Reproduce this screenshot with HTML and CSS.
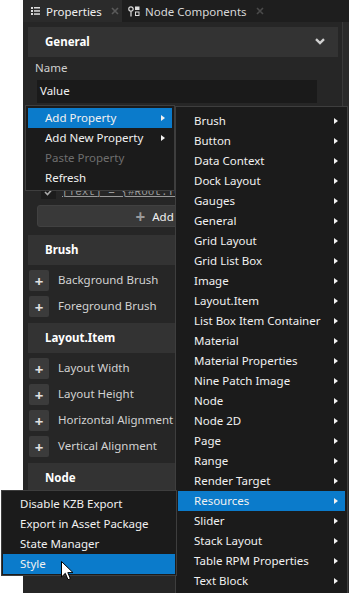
FILE: index.html
```html
<!DOCTYPE html>
<html lang="en">

<head>
    <meta charset="UTF-8">
    <meta name="viewport" content="width=device-width, initial-scale=1.0">
    <title>Properties</title>
    <link rel="stylesheet" href="styles.css">
</head>

<body>

    <!-- properties window -->
    <div class="panel">
        <div class="tabs">
            <div class="tab active">
                <svg class="tab-icon" width="9" height="8" viewBox="0 0 9 8">
                    <rect x="0" y="0" width="2" height="2" fill="#ddd"/>
                    <rect x="3" y="0" width="6" height="1.5" fill="#ddd"/>
                    <rect x="0" y="3" width="2" height="2" fill="#ddd"/>
                    <rect x="3" y="3.2" width="6" height="1.5" fill="#ddd"/>
                    <rect x="0" y="6" width="2" height="2" fill="#ddd"/>
                    <rect x="3" y="6.3" width="6" height="1.5" fill="#ddd"/>
                </svg>
                <span class="tab-title">Properties</span>
                <svg class="tab-close" width="8" height="8" viewBox="0 0 8 8">
                    <path d="M1 1 L7 7 M7 1 L1 7" stroke="#5a5a5a" stroke-width="1.6"/>
                </svg>
            </div>
            <div class="tab">
                <svg class="tab-icon" width="13" height="11" viewBox="0 0 13 11">
                    <circle cx="3" cy="3" r="2.2" fill="none" stroke="#ddd" stroke-width="1.2"/>
                    <path d="M3 5.2 V10.5" stroke="#ddd" stroke-width="1.2"/>
                    <rect x="7" y="0.5" width="4.5" height="3.5" fill="#ddd"/>
                    <rect x="7.5" y="6" width="3.5" height="3.5" fill="none" stroke="#ddd" stroke-width="1"/>
                </svg>
                <span class="tab-title">Node Components</span>
                <svg class="tab-close" width="8" height="8" viewBox="0 0 8 8">
                    <path d="M1 1 L7 7 M7 1 L1 7" stroke="#4a4a4a" stroke-width="1.6"/>
                </svg>
            </div>
        </div>

        <div class="panel-body">
            <div class="content">

                <!-- General -->
                <div class="section-head">
                    <span>General</span>
                    <svg width="10" height="7" viewBox="0 0 10 7">
                        <path d="M1 1.2 L5 5 L9 1.2" fill="none" stroke="#d0d0d0" stroke-width="2.4"/>
                    </svg>
                </div>
                <div class="general">
                    <div class="field-label">Name</div>
                    <div class="field-input">Value</div>
                    <div class="field-label">Text</div>
                    <div class="field-input">Text</div>
                    <div class="binding">
                        <span class="check">
                            <svg width="9" height="8" viewBox="0 0 9 8">
                                <path d="M1 4 L3.5 6.5 L8 1.5" fill="none" stroke="#aaa" stroke-width="1.6"/>
                            </svg>
                        </span>
                        <span class="binding-text">[Text] = {#Root.Text}</span>
                    </div>
                    <div class="add-btn"><span class="plus">+</span>Add Binding</div>
                </div>

                <!-- Brush -->
                <div class="section-head"><span>Brush</span></div>
                <div class="rows">
                    <div class="row"><span class="add">+</span>Background Brush</div>
                    <div class="row"><span class="add">+</span>Foreground Brush</div>
                </div>

                <!-- Layout.Item -->
                <div class="section-head"><span>Layout.Item</span></div>
                <div class="rows">
                    <div class="row"><span class="add">+</span>Layout Width</div>
                    <div class="row"><span class="add">+</span>Layout Height</div>
                    <div class="row"><span class="add">+</span>Horizontal Alignment</div>
                    <div class="row"><span class="add">+</span>Vertical Alignment</div>
                </div>

                <!-- Node -->
                <div class="section-head"><span>Node</span></div>
                <div class="rows">
                    <div class="row"><span class="add">+</span>Visible</div>
                    <div class="row"><span class="add">+</span>Opacity</div>
                    <div class="row"><span class="add">+</span>Hit Testable</div>
                </div>
            </div>
            <div class="scrollbar"></div>
        </div>
    </div>

    <!-- context menu -->
    <div class="menu menu-main">
        <div class="item hover">Add Property<i class="arrow"></i></div>
        <div class="item">Add New Property<i class="arrow"></i></div>
        <div class="item disabled">Paste Property</div>
        <div class="item">Refresh</div>
    </div>

    <!-- Add Property submenu -->
    <div class="menu menu-sub">
        <div class="item">Brush<i class="arrow"></i></div>
        <div class="item">Button<i class="arrow"></i></div>
        <div class="item">Data Context<i class="arrow"></i></div>
        <div class="item">Dock Layout<i class="arrow"></i></div>
        <div class="item">Gauges<i class="arrow"></i></div>
        <div class="item">General<i class="arrow"></i></div>
        <div class="item">Grid Layout<i class="arrow"></i></div>
        <div class="item">Grid List Box<i class="arrow"></i></div>
        <div class="item">Image<i class="arrow"></i></div>
        <div class="item">Layout.Item<i class="arrow"></i></div>
        <div class="item">List Box Item Container<i class="arrow"></i></div>
        <div class="item">Material<i class="arrow"></i></div>
        <div class="item">Material Properties<i class="arrow"></i></div>
        <div class="item">Nine Patch Image<i class="arrow"></i></div>
        <div class="item">Node<i class="arrow"></i></div>
        <div class="item">Node 2D<i class="arrow"></i></div>
        <div class="item">Page<i class="arrow"></i></div>
        <div class="item">Range<i class="arrow"></i></div>
        <div class="item">Render Target<i class="arrow"></i></div>
        <div class="item hover">Resources<i class="arrow"></i></div>
        <div class="item">Slider<i class="arrow"></i></div>
        <div class="item">Stack Layout<i class="arrow"></i></div>
        <div class="item">Table RPM Properties<i class="arrow"></i></div>
        <div class="item">Text Block<i class="arrow"></i></div>
    </div>

    <!-- Resources submenu -->
    <div class="menu menu-res">
        <div class="item">Disable KZB Export</div>
        <div class="item">Export in Asset Package</div>
        <div class="item">State Manager</div>
        <div class="item hover">Style</div>
    </div>

    <!-- mouse pointer -->
    <svg class="cursor" width="13" height="20" viewBox="0 0 13 20">
        <path d="M0.5 0.5 L0.5 16 L4.3 12.3 L7 18.7 L9.4 17.7 L6.8 11.6 L12 11.6 Z" fill="#fff" stroke="#000" stroke-width="1"/>
    </svg>

</body>

</html>
```

FILE: styles.css
```css
* {
    box-sizing: border-box;
}

body {
    margin: 0;
    height: 593px;
    overflow: hidden;
    position: relative;
    background: #fff;
    font-family: "Noto Sans", "Open Sans", sans-serif;
    font-size: 11.5px;
    color: #d6d6d6;
}

/* window */
.panel {
    margin-left: 23px;
    height: 593px;
    background: #262626;
    display: flex;
    flex-direction: column;
}

.tabs {
    height: 22px;
    flex-shrink: 0;
    background: #1e1e1e;
    display: flex;
}

.tab {
    display: flex;
    align-items: center;
    padding: 0 10px 0 6px;
    color: #d8d8d8;
}

.tab.active {
    width: 99px;
    padding: 0 0 0 8px;
    background: #2b2b2b;
    color: #f0f0f0;
}

.tab-icon {
    margin-right: 4px;
}

.tab.active .tab-icon {
    margin-right: 6px;
}

.tab-close {
    margin-left: 9px;
}

.panel-body {
    flex: 1;
    display: flex;
    min-height: 0;
}

.content {
    flex: 1;
    padding: 5px 4px 0 5px;
}

.scrollbar {
    width: 7px;
    border-left: 1px solid #3a3a3a;
    background: #2a2a2a;
}

/* sections */
.section-head {
    height: 30px;
    background: #333;
    display: flex;
    align-items: center;
    justify-content: space-between;
    padding: 0 13px 1px 17px;
    font-weight: bold;
    color: #fff;
}

.general {
    padding: 3px 0 8px;
}

.field-label {
    height: 16px;
    line-height: 16px;
    margin: 0 0 4px 7px;
    color: #cfcfcf;
}

.field-input {
    width: 280px;
    height: 23px;
    line-height: 22px;
    margin-left: 9px;
    padding-left: 3px;
    background: #1a1a1a;
    color: #f2f2f2;
}

.binding {
    display: flex;
    align-items: center;
    height: 15px;
    margin: 38px 0 6px 13px;
}

.check {
    width: 15px;
    height: 15px;
    background: #1c1c1c;
    display: flex;
    align-items: center;
    justify-content: center;
    margin-right: 6px;
}

.binding-text {
    font-family: "Liberation Mono", monospace;
    font-size: 11px;
    color: #9a9a9a;
    text-decoration: underline;
}

.add-btn {
    width: 280px;
    height: 22px;
    margin-left: 9px;
    border: 1px solid #414141;
    border-radius: 3px;
    background: #393939;
    display: flex;
    align-items: center;
    justify-content: center;
    color: #f0f0f0;
}

.add-btn .plus {
    font-size: 17px;
    font-weight: bold;
    color: #9a9a9a;
    margin-right: 7px;
    line-height: 1;
}

.rows {
    display: flex;
    flex-direction: column;
    gap: 5px;
    padding: 5px 0 6px;
}

.row {
    height: 21px;
    display: flex;
    align-items: center;
    padding: 0 0 2px 1px;
    color: #d2d2d2;
}

.row .add {
    width: 20px;
    height: 21px;
    margin: 2px 9px 0 0;
    border-radius: 2px;
    background: #3b3b3b;
    color: #e0e0e0;
    font-size: 15px;
    font-weight: bold;
    display: flex;
    align-items: center;
    justify-content: center;
}

/* menus */
.menu {
    position: absolute;
    background: #1b1b1b;
    border: 1px solid #3e3e3e;
    color: #f1f1f1;
}

.menu .item {
    height: 20px;
    display: flex;
    align-items: center;
    justify-content: space-between;
    white-space: nowrap;
    padding-bottom: 1px;
}

.menu .item.hover {
    background: #0b7bcb;
}

.menu .item.disabled {
    color: #6e6e6e;
}

.arrow {
    width: 0;
    height: 0;
    border-left: 4px solid #f1f1f1;
    border-top: 3.5px solid transparent;
    border-bottom: 3.5px solid transparent;
}

.menu-main {
    left: 25px;
    top: 105px;
    width: 150px;
    padding: 2px;
    z-index: 1;
}

.menu-main .item {
    padding-left: 17px;
    padding-right: 7px;
}

.menu-sub {
    left: 175px;
    top: 106px;
    width: 173px;
    padding: 4px 2px;
    z-index: 2;
}

.menu-sub .item {
    padding-left: 16px;
    padding-right: 7px;
}

.menu-res {
    left: 1px;
    top: 490px;
    width: 176px;
    padding: 3px 1px 1px;
    z-index: 3;
}

.menu-res .item {
    padding-left: 17px;
}

.cursor {
    position: absolute;
    left: 61px;
    top: 561px;
    z-index: 4;
}
```
